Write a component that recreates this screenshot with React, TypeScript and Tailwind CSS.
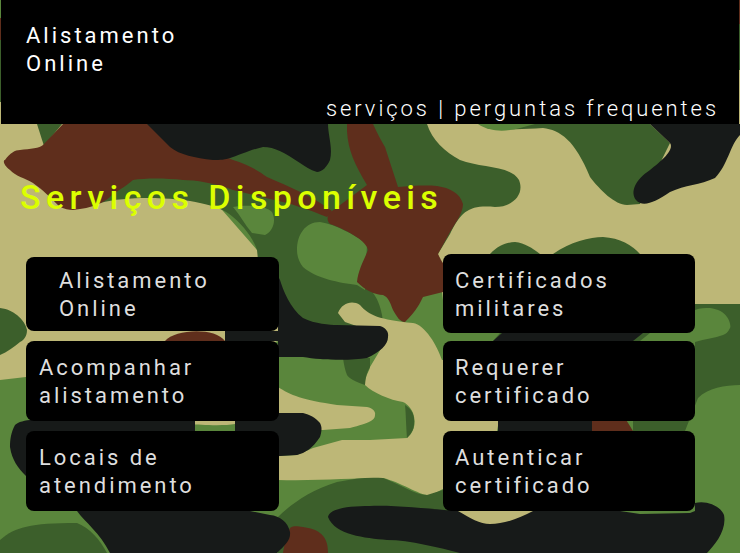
const KHAKI = "#bdb777";
const DARK = "#3c5f2b";
const MID = "#5a863c";
const BROWN = "#5f2e1c";
const BLACK = "#171a19";

function Camo() {
  return (
    <svg className="absolute inset-0 h-full w-full" viewBox="0 0 740 553" aria-hidden="true">
      <rect width="740" height="553" fill={MID} />
      {/* slivers beside the header */}
      <rect x="0" y="18" width="2" height="22" fill={BROWN} />
      <rect x="0" y="40" width="2" height="62" fill={DARK} />
      <rect x="738" y="0" width="2" height="24" fill={BROWN} />
      <rect x="738" y="24" width="2" height="46" fill={DARK} />
      <rect x="738" y="70" width="2" height="54" fill={KHAKI} />
      {/* left khaki */}
      <path fill={KHAKI} d="M0,102 L30,102 L147,124 L257,250 L278,257 L278,341 L200,370 L26,377 L0,380 Z" />
      <path fill={DARK} d="M0,308 C8,309 13,312 17,315 C23,320 26,325 27,330 C27,336 24,340 20,342 C14,347 7,352 0,355 Z" />
      {/* dark top */}
      <path fill={DARK} d="M37,124 L62,124 L44,146 Z" />
      <path fill={DARK} d="M100,203 C130,195 180,198 200,203 C215,206 225,210 233,217 C245,227 254,240 257,250 L262,300 L300,335 L385,335 L382,315 C380,305 377,298 373,293 L370,250 L440,250 L470,215 L535,215 L535,124 L147,124 L120,170 Z" />
      {/* small mid patches */}
      <path fill={MID} d="M233,207 C245,205 265,205 272,212 C277,222 272,232 265,235 L252,233 C245,225 240,215 233,207 Z" />
      <path fill={MID} d="M297,250 C297,235 305,222 320,222 C335,224 355,235 367,244 L365,290 L357,285 C340,283 315,278 303,267 C299,262 297,256 297,250 Z" />
      {/* right khaki */}
      <path fill={KHAKI} d="M427,124 C432,140 445,152 460,160 C480,168 510,165 519,180 C525,195 512,207 495,207 C470,205 462,210 450,234 L438,254 L443,300 L695,300 L695,304 L740,304 L740,124 Z" />
      {/* dark top right */}
      <path fill={DARK} d="M487,124 C497,130 515,130 543,128 C560,130 575,140 590,177 C600,190 615,205 627,205 L640,204 L670,143 L650,124 Z" />
      <path fill={MID} d="M478,124 C490,132 505,132 520,128 L535,124 Z" />
      <path fill={BLACK} d="M650,124 L740,124 L740,135 C730,145 728,165 715,178 C700,185 685,185 670,192 C655,202 643,208 636,200 C630,192 635,180 650,170 C660,162 675,150 670,143 Z" />
      {/* hills behind right column */}
      <path fill={DARK} d="M490,254 C498,245 508,242 515,242 C525,243 532,248 540,254 Z" />
      <path fill={DARK} d="M553,254 C570,242 590,237 603,237 C620,238 632,245 640,254 Z" />
      {/* gap between right buttons */}
      <path fill={DARK} d="M500,333 L650,333 L640,341 L493,341 Z" />
      <path fill={BLACK} d="M502,333 L643,333 L633,341 L493,341 Z" />
      {/* right dark + patch */}
      <path fill={DARK} d="M695,304 L740,304 L740,385 C725,385 708,388 698,398 L685,431 L633,431 L633,415 L695,380 Z" />
      <path fill={MID} d="M695,310 C700,308 705,308 710,308 C718,309 724,312 727,317 C730,321 731,327 730,328 C728,332 726,334 723,335 C715,338 705,339 695,342 Z" />
      {/* center khaki */}
      <path fill={KHAKI} d="M338,313 C342,303 352,300 360,305 C368,315 380,320 413,323 C425,325 437,345 442,360 L446,360 L446,489 L443,489 C435,493 430,496 427,495 C420,495 400,482 383,478 C350,478 320,481 278,480 L278,456 L297,455 L313,448 L342,440 L370,440 L407,438 C413,433 417,425 413,413 C410,405 403,402 403,402 C390,400 373,393 365,385 C365,375 370,370 370,367 L388,337 L345,322 Z" />
      <path fill={DARK} d="M343,358 L370,358 L370,367 C367,372 365,378 365,385 C355,382 349,378 347,375 C345,370 344,365 343,358 Z" />
      <path fill={KHAKI} d="M278,387 C290,395 303,400 337,405 L367,407 C373,408 376,412 375,415 C375,420 370,423 350,428 L323,430 L278,430 Z" />
      <path fill={DARK} d="M405,405 C410,408 413,412 414,418 C415,428 412,433 407,438 C406,425 406,415 405,405 Z" />
      <path fill={KHAKI} d="M443,415 L500,415 L497,431 L443,435 Z" />
      <path fill={KHAKI} d="M190,418 L235,418 L235,424 C225,426 200,425 190,424 Z" />
      {/* dark lower */}
      <path fill={DARK} d="M278,517 C290,505 310,490 337,482 C355,478 370,477 383,478 C400,484 415,495 427,495 L443,490 L470,511 L500,553 L278,553 Z" />
      <path fill={DARK} d="M0,540 C15,527 30,523 77,523 C90,528 100,540 107,553 L0,553 Z" />
      {/* brown */}
      <path fill={BROWN} d="M63,124 L147,124 L233,160 C250,165 260,172 267,177 C290,187 310,195 332,211 L327,217 C310,210 290,203 270,199 L233,190 C215,183 195,180 183,180 C165,178 145,178 133,180 C125,187 115,192 110,197 C103,203 93,208 73,210 C68,210 65,209 60,207 C50,197 43,190 33,183 C25,178 15,176 10,170 C3,165 3,160 5,160 C10,153 15,150 20,150 C30,149 40,148 43,145 Z" />
      <path fill={BROWN} d="M347,124 L373,124 C378,135 381,140 385,147 L398,187 C410,186 425,185 437,186 C450,188 460,193 463,204 C463,212 457,221 450,232 L438,254 C440,258 442,262 443,263 L443,292 L423,297 C420,303 417,310 405,322 C400,322 397,317 393,310 C390,302 388,297 383,295 C375,295 365,290 357,282 C358,270 365,258 368,250 C367,242 350,231 330,224 C326,220 327,214 332,211 L367,185 C355,165 348,150 347,131 Z" />
      <path fill={BROWN} d="M165,341 C175,329 215,327 225,341 Z" />
      <path fill={BROWN} d="M592,431 L592,418 L625,418 L633,431 Z" />
      <path fill={BROWN} d="M283,553 C285,540 288,532 290,528 C295,525 298,527 303,527 C310,528 317,530 320,533 C325,537 328,542 328,553 Z" />
      <path fill={BROWN} d="M160,553 C170,551 180,551 187,553 Z" />
      {/* black */}
      <path fill={BLACK} d="M147,124 L328,124 C328,135 333,148 330,160 C327,167 322,172 317,172 C310,170 305,166 300,163 C285,153 275,147 263,147 C250,150 240,155 233,157 C225,160 220,160 213,160 C195,158 180,155 170,147 Z" />
      <path fill={BLACK} d="M278,276 L280,280 C283,290 290,308 303,318 C315,324 330,325 337,325 L380,326 C386,328 389,332 388,337 C388,345 380,352 367,358 C350,361 320,360 303,357 L278,357 Z" />
      <path fill={BLACK} d="M225,331 L280,331 L280,341 L225,341 Z" />
      <path fill={BLACK} d="M33,420 C25,420 18,422 15,425 C11,432 10,440 10,447 C12,460 18,468 26,476 L280,456 L297,455 C305,453 313,448 320,437 C322,430 322,427 320,423 C315,417 310,415 303,413 L278,413 L235,421 L235,431 L195,431 L195,421 Z" />
      <path fill={BLACK} d="M77,511 C85,522 100,533 110,553 L277,553 C285,545 291,540 290,532 C288,522 280,516 270,515 L250,511 Z" />
      <path fill={BLACK} d="M328,517 C330,508 350,506 370,506 C400,505 437,510 460,511 L695,511 L695,503 C705,500 720,505 724,515 C727,530 715,545 707,553 L460,553 C440,548 410,540 387,540 C365,538 335,535 328,517 Z" />
      <path fill={BLACK} d="M498,421 L592,421 L592,431 L498,431 Z" />
      <path fill={KHAKI} d="M458,511 C470,518 480,524 490,524 C505,524 520,518 533,511 Z" />
      <path fill={MID} d="M620,511 L695,511 L690,513 L640,514 Z" />
    </svg>
  );
}

function NavButton({ lines, className }: { lines: string[]; className: string }) {
  return (
    <a className={`flex flex-col justify-center rounded-lg bg-black pt-[2px] text-[22px] leading-[28px] font-normal tracking-[2.95px] text-[#dedede] ${className}`}>
      {lines.map((l) => (
        <span key={l}>{l}</span>
      ))}
    </a>
  );
}

export default function App() {
  return (
    <div className="relative h-[553px] w-[740px] overflow-hidden font-['Roboto',sans-serif]">
      <Camo />
      <div className="relative flex h-full flex-col">
        <header className="mx-px flex h-[124px] flex-col justify-between bg-black pl-[25px] pr-[20px]">
          <h1 className="mt-[22px] text-[22px] leading-[28px] font-normal tracking-[3px] text-white">
            Alistamento
            <br />
            Online
          </h1>
          <nav className="mb-[1px] self-end text-[22px] leading-[28px] font-light tracking-[2.94px] text-white">
            serviços | perguntas frequentes
          </nav>
        </header>
        <h2 className="mt-[53px] ml-[20px] text-[34px] leading-[40px] font-medium tracking-[5.4px] text-[#dcff00]">
          Serviços Disponíveis
        </h2>
        <div className="mt-[37px] flex justify-between pl-[26px] pr-[45px]">
          <div className="flex w-[253px] flex-col">
            <NavButton lines={["Alistamento", "Online"]} className="mt-[3px] h-[74px] pl-[33px]" />
            <NavButton lines={["Acompanhar", "alistamento"]} className="mt-[10px] h-[80px] pl-[13px]" />
            <NavButton lines={["Locais de", "atendimento"]} className="mt-[10px] h-[80px] pl-[13px]" />
          </div>
          <div className="flex w-[252px] flex-col">
            <NavButton lines={["Certificados", "militares"]} className="h-[79px] pl-[12px]" />
            <NavButton lines={["Requerer", "certificado"]} className="mt-[8px] h-[80px] pl-[12px]" />
            <NavButton lines={["Autenticar", "certificado"]} className="mt-[10px] h-[80px] pl-[12px]" />
          </div>
        </div>
      </div>
    </div>
  );
}
